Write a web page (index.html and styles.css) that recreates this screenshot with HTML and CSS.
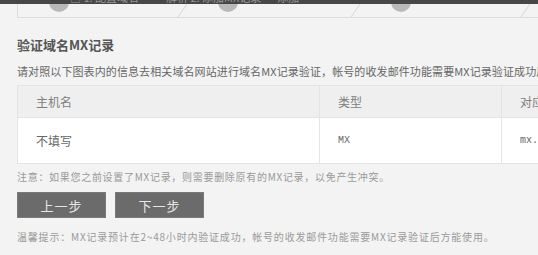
FILE: index.html
```html
<!DOCTYPE html>
<html lang="zh-CN">
<head>
    <meta charset="UTF-8">
    <title>验证域名MX记录</title>
    <link rel="stylesheet" href="styles.css">
</head>
<body>
<div class="page">
    <div class="topbar">
        <span class="topbar-text">□ 1. 配置域名 —— 解析 2. 添加MX记录 · 添加</span>
    </div>
    <div class="steps">
        <svg class="steps-art" width="520" height="14" viewBox="0 0 520 14">
            <circle cx="41" cy="-2" r="10" fill="#b9b9b9"/>
            <circle cx="210" cy="-2" r="10" fill="#b9b9b9"/>
            <circle cx="383" cy="-2" r="10" fill="#b9b9b9"/>
            <line x1="160" y1="13" x2="169" y2="0" stroke="#d6d6d6" stroke-width="1"/>
            <line x1="333" y1="13" x2="342" y2="0" stroke="#d6d6d6" stroke-width="1"/>
            <line x1="503" y1="13" x2="512" y2="0" stroke="#d6d6d6" stroke-width="1"/>
        </svg>
    </div>

    <div class="content">
        <h2 class="title">验证域名MX记录</h2>
        <p class="desc">请对照以下图表内的信息去相关域名网站进行域名MX记录验证，帐号的收发邮件功能需要MX记录验证成功后方能使用。</p>

        <table class="mx-table">
            <thead>
            <tr>
                <th class="col-host">主机名</th>
                <th class="col-type">类型</th>
                <th class="col-value">对应值</th>
            </tr>
            </thead>
            <tbody>
            <tr>
                <td>不填写</td>
                <td class="mono">MX</td>
                <td class="mono">mx.qiye.163.com</td>
            </tr>
            </tbody>
        </table>

        <p class="note">注意：如果您之前设置了MX记录，则需要删除原有的MX记录，以免产生冲突。</p>

        <div class="buttons">
            <button class="btn">上一步</button>
            <button class="btn">下一步</button>
        </div>

        <p class="note tip">温馨提示：MX记录预计在2~48小时内验证成功，帐号的收发邮件功能需要MX记录验证后方能使用。</p>
    </div>
</div>
</body>
</html>
```

FILE: styles.css
```css
body {
    margin: 0;
    padding: 0;
    background: #f3f3f3;
    font-family: "Noto Sans CJK SC", "Liberation Sans", sans-serif;
    overflow: hidden;
}

.page {
    width: 538px;
    overflow: hidden;
}

/* тёмная полоска сверху */
.topbar {
    height: 4px;
    background: #474747;
    overflow: hidden;
    padding-left: 70px;
}
.topbar-text {
    display: block;
    margin-top: -9px;
    font-size: 11px;
    line-height: 12px;
    color: #9a9a9a;
    white-space: nowrap;
}

.steps {
    height: 13px;
    margin-left: 17px;
    border-left: 1px solid #dcdcdc;
    border-bottom: 1px solid #dcdcdc;
    overflow: hidden;
}
.steps-art {
    display: block;
}

.content {
    padding-left: 17px;
}

.title {
    margin: 18px 0 0;
    font-size: 13px;
    line-height: 18px;
    font-weight: bold;
    color: #555;
}

.desc {
    margin: 8px 0 0;
    font-size: 11px;
    line-height: 18px;
    letter-spacing: 0.1px;
    color: #666;
    white-space: nowrap;
}

.mx-table {
    margin-top: 5px;
    width: 720px;
    border-collapse: collapse;
    font-size: 12px;
}
.mx-table th,
.mx-table td {
    border: 1px solid #e4e4e4;
    text-align: left;
    padding: 0 0 0 18px;
}
.mx-table th {
    height: 31px;
    background: #efefef;
    font-weight: normal;
    color: #7e7e7e;
    font-size: 12px;
}
.mx-table td {
    height: 45px;
    background: #fff;
    color: #666;
}
.col-host {
    width: 283px;
}
.col-type {
    width: 163px;
}
.mono {
    font-family: "Liberation Mono", monospace;
    font-size: 10px;
    color: #777;
}

.note {
    margin: 5px 0 0;
    font-size: 10px;
    line-height: 16px;
    letter-spacing: 0.7px;
    color: #9a9a9a;
    white-space: nowrap;
}

.buttons {
    display: flex;
    gap: 9px;
    margin-top: 7px;
}
.btn {
    width: 89px;
    height: 26px;
    padding: 0;
    border: 1px solid #7a7a7a;
    background: #6b6b6b;
    color: #e6e6e6;
    font-family: "Noto Sans CJK SC", sans-serif;
    font-size: 13px;
    letter-spacing: 1px;
    cursor: pointer;
}

.tip {
    margin-top: 11px;
    letter-spacing: 0.8px;
}
```
